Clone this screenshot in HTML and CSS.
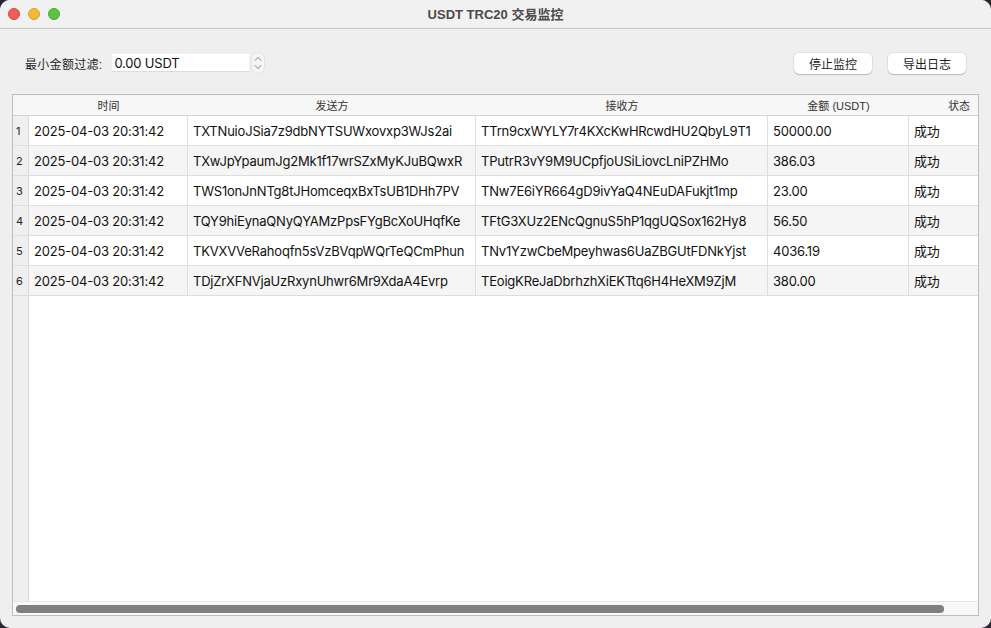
FILE: index.html
```html
<!DOCTYPE html>
<html lang="zh">
<head>
<meta charset="utf-8">
<title>USDT TRC20 交易监控</title>
<link rel="stylesheet" href="styles.css">
</head>
<body>
<div class="window">
  <div class="titlebar">
    <div class="lights">
      <span class="light red"></span>
      <span class="light yellow"></span>
      <span class="light green"></span>
    </div>
    <div class="title">USDT TRC20 交易监控</div>
  </div>
  <div class="content">
    <div class="toolbar">
      <div class="filter">
        <span class="label">最小金额过滤:</span>
        <div class="input">0.00 USDT</div>
        <div class="spinner">
          <svg width="14" height="22" viewBox="0 0 14 22">
            <rect x="0.5" y="0.5" width="13" height="21" rx="6.5" fill="#f6f6f6" stroke="#e2e2e2"/>
            <path d="M4 8.5 L7 5.5 L10 8.5" fill="none" stroke="#b8b8b8" stroke-width="1.2" stroke-linecap="round" stroke-linejoin="round"/>
            <path d="M4 13.5 L7 16.5 L10 13.5" fill="none" stroke="#b8b8b8" stroke-width="1.2" stroke-linecap="round" stroke-linejoin="round"/>
          </svg>
        </div>
      </div>
      <div class="actions">
        <button class="btn">停止监控</button>
        <button class="btn">导出日志</button>
      </div>
    </div>
    <div class="table">
      <div class="row head">
        <div class="rh"></div>
        <div class="c">时间</div>
        <div class="c">发送方</div>
        <div class="c">接收方</div>
        <div class="c">金额 (USDT)</div>
        <div class="c">状态</div>
      </div>
      <div class="row">
        <div class="rh">1</div><div class="c">2025-04-03 20:31:42</div><div class="c">TXTNuioJSia7z9dbNYTSUWxovxp3WJs2ai</div><div class="c">TTrn9cxWYLY7r4KXcKwHRcwdHU2QbyL9T1</div><div class="c">50000.00</div><div class="c">成功</div>
      </div>
      <div class="row alt">
        <div class="rh">2</div><div class="c">2025-04-03 20:31:42</div><div class="c">TXwJpYpaumJg2Mk1f17wrSZxMyKJuBQwxR</div><div class="c">TPutrR3vY9M9UCpfjoUSiLiovcLniPZHMo</div><div class="c">386.03</div><div class="c">成功</div>
      </div>
      <div class="row">
        <div class="rh">3</div><div class="c">2025-04-03 20:31:42</div><div class="c">TWS1onJnNTg8tJHomceqxBxTsUB1DHh7PV</div><div class="c">TNw7E6iYR664gD9ivYaQ4NEuDAFukjt1mp</div><div class="c">23.00</div><div class="c">成功</div>
      </div>
      <div class="row alt">
        <div class="rh">4</div><div class="c">2025-04-03 20:31:42</div><div class="c">TQY9hiEynaQNyQYAMzPpsFYgBcXoUHqfKe</div><div class="c">TFtG3XUz2ENcQgnuS5hP1qgUQSox162Hy8</div><div class="c">56.50</div><div class="c">成功</div>
      </div>
      <div class="row">
        <div class="rh">5</div><div class="c">2025-04-03 20:31:42</div><div class="c">TKVXVVeRahoqfn5sVzBVqpWQrTeQCmPhun</div><div class="c">TNv1YzwCbeMpeyhwas6UaZBGUtFDNkYjst</div><div class="c">4036.19</div><div class="c">成功</div>
      </div>
      <div class="row alt">
        <div class="rh">6</div><div class="c">2025-04-03 20:31:42</div><div class="c">TDjZrXFNVjaUzRxynUhwr6Mr9XdaA4Evrp</div><div class="c">TEoigKReJaDbrhzhXiEKTtq6H4HeXM9ZjM</div><div class="c">380.00</div><div class="c">成功</div>
      </div>
      <div class="filler">
        <div class="rh-fill"></div>
        <div class="blank"></div>
      </div>
      <div class="hscroll"><div class="thumb"></div></div>
    </div>
  </div>
</div>
</body>
</html>
```

FILE: styles.css
```css
* { box-sizing: border-box; }
html, body { margin: 0; padding: 0; }
body {
  width: 991px;
  height: 628px;
  background: #2b2433;
  overflow: hidden;
  font-family: "Liberation Sans", "Noto Sans CJK SC", sans-serif;
}
.window {
  width: 991px;
  height: 628px;
  background: #efefef;
  border-radius: 10px;
  overflow: hidden;
  display: flex;
  flex-direction: column;
}
.titlebar {
  height: 29px;
  flex: none;
  background: #f2f1f2;
  border-bottom: 1px solid #c9c8ca;
  position: relative;
  display: flex;
  align-items: center;
  justify-content: center;
}
.lights {
  position: absolute;
  left: 8px;
  top: 8px;
  display: flex;
  gap: 8px;
}
.light {
  width: 12px;
  height: 12px;
  border-radius: 50%;
  display: block;
}
.red { background: #ed5f57; border: 0.5px solid #d6473f; }
.yellow { background: #f2b93a; border: 0.5px solid #d9a02c; }
.green { background: #5dc443; border: 0.5px solid #4aa933; }
.title {
  font-size: 13px;
  font-weight: bold;
  color: #4a4a4a;
  margin-top: -1px;
}
.content {
  flex: 1;
  display: flex;
  flex-direction: column;
  padding: 22px 12px 12px 12px;
}
.toolbar {
  display: flex;
  justify-content: space-between;
  align-items: center;
  height: 24px;
  padding: 0 13px;
}
.filter {
  display: flex;
  align-items: center;
}
.label {
  font-size: 12px;
  color: #1f1f1f;
  margin-right: 10px;
  letter-spacing: 0.3px;
}
.input {
  width: 137px;
  height: 18px;
  background: #fff;
  border-bottom: 1px solid #dcdcdc;
  font-family: Inter, "Noto Sans CJK SC", sans-serif;
  font-size: 13px;
  letter-spacing: -0.2px;
  color: #111;
  padding: 1px 0 0 2px;
  line-height: 17px;
}
.spinner {
  margin-left: 2px;
  height: 22px;
  display: flex;
}
.actions {
  display: flex;
  gap: 16px;
}
.btn {
  width: 78px;
  height: 21px;
  border: none;
  background: #fff;
  border-radius: 5px;
  box-shadow: 0 0 0 0.5px rgba(0,0,0,0.12), 0 1px 1px rgba(0,0,0,0.18);
  font-family: "Liberation Sans", "Noto Sans CJK SC", sans-serif;
  font-size: 12px;
  color: #1f1f1f;
  padding: 0;
}
.table {
  margin-top: 19px;
  flex: 1;
  border: 1px solid #bdbdbd;
  background: #fff;
  display: flex;
  flex-direction: column;
  overflow: hidden;
}
.row {
  display: grid;
  grid-template-columns: 16px 159px 288px 292px 141px 100px;
  height: 30px;
  background: #fff;
  border-bottom: 1px solid #dedede;
  font-family: Inter, "Noto Sans CJK SC", sans-serif;
  font-size: 13px;
  letter-spacing: -0.2px;
  color: #111;
  flex: none;
}
.row.alt { background: #f5f5f5; }
.row .c {
  border-right: 1px solid #dedede;
  padding-left: 5px;
  display: flex;
  align-items: center;
  white-space: nowrap;
  overflow: hidden;
}
.row .rh {
  background: #efefef;
  border-right: 1px solid #d9d9d9;
  font-size: 11px;
  letter-spacing: 0;
  color: #222;
  display: flex;
  align-items: center;
  padding-left: 3px;
}
.row.head {
  height: 21px;
  background: #f7f7f7;
  border-bottom: 1px solid #d3d3d3;
  font-family: "Liberation Sans", "Noto Sans CJK SC", sans-serif;
  font-size: 11px;
  letter-spacing: 0;
  color: #333;
}
.row.head .c {
  justify-content: center;
  padding: 0;
  border-right: none;
  position: relative;
}
.row.head .c::before {
  content: "";
  position: absolute;
  left: -1px;
  top: 3px;
  bottom: 3px;
  width: 1px;
  background: #d6d6d6;
}
.row.head .rh {
  background: #f7f7f7;
  border-right: none;
}
.filler {
  flex: 1;
  display: flex;
}
.rh-fill {
  width: 16px;
  background: #efefef;
  border-right: 1px solid #d9d9d9;
}
.blank {
  flex: 1;
  background: #fff;
}
.hscroll {
  height: 14px;
  flex: none;
  background: #f8f8f8;
  border-top: 1px solid #e6e6e6;
  padding: 3px 34px 0 3px;
}
.thumb {
  height: 8px;
  border-radius: 4px;
  background: #7f7f7f;
}
```
